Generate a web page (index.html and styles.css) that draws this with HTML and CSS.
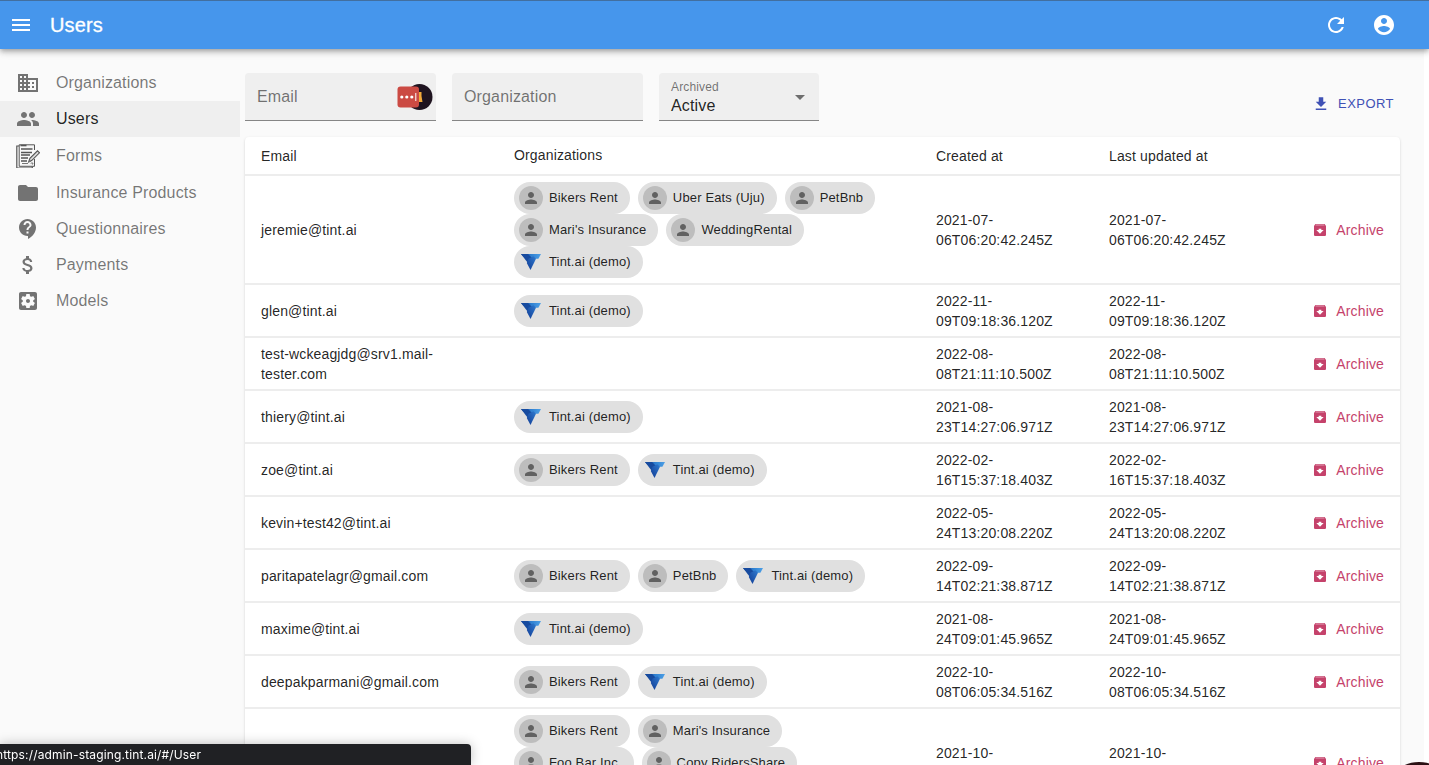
FILE: index.html
```
<!DOCTYPE html>
<html lang="en">
<head>
<meta charset="utf-8">
<title>Users</title>
<link rel="stylesheet" href="styles.css">
</head>
<body>
<svg class="defs" aria-hidden="true">
  <defs>
    <linearGradient id="tintA" x1="0" y1="0" x2="1" y2="0"><stop offset="0" stop-color="#123f8f"/><stop offset=".5" stop-color="#2f7fd0"/><stop offset="1" stop-color="#4da0e6"/></linearGradient>
    <linearGradient id="tintB" x1="1" y1="0" x2="0" y2="1"><stop offset="0" stop-color="#2f7bd0"/><stop offset="1" stop-color="#123c94"/></linearGradient>
  </defs>
  <symbol id="person" viewBox="0 0 24 24"><path d="M12 12c2.21 0 4-1.79 4-4s-1.79-4-4-4-4 1.790-4 4 1.790 4 4 4zm0 2c-2.670 0-8 1.340-8 4v2h16v-2c0-2.660-5.330-4-8-4z"/></symbol>
  <symbol id="tint" viewBox="0 0 24 24"><path d="M2 4h20l-2.600 4.700H6.500z" fill="url(#tintA)"/><path d="M2 4h7l4.500 4.500-5 4z" fill="#174b9f"/><path d="M9.500 8.700l5-2.500 2.500 2.500-5.500 11.300-3.700-7z" fill="url(#tintB)"/></symbol>
  <symbol id="archive" viewBox="0 0 24 24"><path d="M20.540 5.230l-1.390-1.680C18.880 3.210 18.470 3 18 3H6c-.47 0-.88.210-1.160.550L3.460 5.230C3.170 5.570 3 6.020 3 6.500V19c0 1.100.9 2 2 2h14c1.100 0 2-.9 2-2V6.500c0-.48-.17-.93-.46-1.270zM12 17.500L6.500 12H10v-2h4v2h3.500L12 17.500zM5.120 5l.81-1h12l.94 1H5.120z"/></symbol>
</svg>

<header class="appbar">
  <svg class="icon" viewBox="0 0 24 24"><path d="M3 18h18v-2H3v2zm0-5h18v-2H3v2zm0-7v2h18V6H3z"/></svg>
  <h1 class="title">Users</h1>
  <svg class="icon" viewBox="0 0 24 24"><path d="M17.650 6.350C16.200 4.900 14.210 4 12 4c-4.420 0-7.990 3.580-7.990 8s3.570 8 7.990 8c3.730 0 6.840-2.550 7.730-6h-2.080c-.82 2.330-3.040 4-5.650 4-3.310 0-6-2.690-6-6s2.690-6 6-6c1.660 0 3.140.69 4.220 1.780L13 11h7V4l-2.350 2.350z"/></svg>
  <svg class="icon" viewBox="0 0 24 24"><path d="M12 2C6.480 2 2 6.480 2 12s4.480 10 10 10 10-4.480 10-10S17.520 2 12 2zm0 3c1.660 0 3 1.340 3 3s-1.340 3-3 3-3-1.340-3-3 1.340-3 3-3zm0 14.200c-2.500 0-4.710-1.280-6-3.220.03-1.990 4-3.080 6-3.080 1.990 0 5.970 1.090 6 3.080-1.290 1.940-3.500 3.220-6 3.220z"/></svg>
</header>

<div class="layout">
  <nav class="menu">
    <a class="item"><svg class="icon" viewBox="0 0 24 24"><path d="M12 7V3H2v18h20V7H12zM6 19H4v-2h2v2zm0-4H4v-2h2v2zm0-4H4V9h2v2zm0-4H4V5h2v2zm4 12H8v-2h2v2zm0-4H8v-2h2v2zm0-4H8V9h2v2zm0-4H8V5h2v2zm10 12h-8v-2h2v-2h-2v-2h2v-2h-2V9h8v10zm-2-8h-2v2h2v-2zm0 4h-2v2h2v-2z"/></svg>Organizations</a>
    <a class="item active"><svg class="icon" viewBox="0 0 24 24"><path d="M16 11c1.660 0 2.990-1.340 2.990-3S17.660 5 16 5c-1.660 0-3 1.340-3 3s1.340 3 3 3zm-8 0c1.660 0 2.990-1.340 2.990-3S9.660 5 8 5C6.340 5 5 6.340 5 8s1.340 3 3 3zm0 2c-2.330 0-7 1.170-7 3.500V19h14v-2.500c0-2.330-4.670-3.500-7-3.500zm8 0c-.29 0-.62.020-.97.050 1.160.84 1.970 1.970 1.970 3.450V19h6v-2.500c0-2.330-4.670-3.500-7-3.500z"/></svg>Users</a>
    <a class="item forms"><svg class="icon" viewBox="0 0 24 24"><g fill="none" stroke="#555"><path d="M1 1h17.500v5M18.500 15v8H1zM18.500 22.500" stroke="none" fill="#f4f4f4"/><path d="M18.500 6V.8H3.200v21.500h15.300V15" stroke-width="1"/><path d="M3 2H.8v22h15.500v-1.500" stroke-width="1.200"/><path d="M4.500 1.500h6" stroke-width="1.600"/><path d="M5 5h11.500M5 8.500h11M5 11h9M5 14h7M5 17h6" stroke-width="1.300"/><path d="M6 19.500h6" stroke-width=".8"/><path d="M12.700 18l1.200-3.700 7.600-7.500 2 2-7.600 7.500z" fill="#ddd" stroke-width="1.100"/><path d="M15 19.500c1.500-2 2.500.5 1 1" stroke-width="1"/></g><path d="M12.300 18.500l1-3 2 2z"/></svg>Forms</a>
    <a class="item"><svg class="icon" viewBox="0 0 24 24"><path d="M10 4H4c-1.100 0-1.990.9-1.990 2L2 18c0 1.100.9 2 2 2h16c1.100 0 2-.9 2-2V8c0-1.100-.9-2-2-2h-8l-2-2z"/></svg>Insurance Products</a>
    <a class="item"><svg class="icon" viewBox="0 0 24 24"><path d="M11.500 2C6.810 2 3 5.810 3 10.500S6.810 19 11.500 19h.5v3c4.860-2.340 8-7 8-11.500C20 5.810 16.190 2 11.500 2zm1 14.500h-2v-2h2v2zm0-3.500h-2c0-3.250 3-3 3-5 0-1.100-.9-2-2-2s-2 .9-2 2h-2c0-2.210 1.790-4 4-4s4 1.790 4 4c0 2.500-3 2.750-3 5z"/></svg>Questionnaires</a>
    <a class="item"><svg class="icon" viewBox="0 0 24 24"><path d="M11.800 10.900c-2.270-.59-3-1.200-3-2.150 0-1.090 1.010-1.850 2.700-1.850 1.780 0 2.440.85 2.500 2.100h2.210c-.07-1.720-1.120-3.300-3.210-3.810V3h-3v2.160c-1.940.42-3.500 1.680-3.500 3.610 0 2.310 1.910 3.460 4.700 4.130 2.500.6 3 1.480 3 2.410 0 .69-.49 1.790-2.700 1.790-2.060 0-2.870-.92-2.980-2.100h-2.200c.12 2.190 1.760 3.420 3.680 3.830V21h3v-2.150c1.950-.37 3.500-1.500 3.500-3.550 0-2.840-2.430-3.810-4.700-4.400z"/></svg>Payments</a>
    <a class="item"><svg class="icon" viewBox="0 0 24 24"><path d="M12 10c-1.100 0-2 .9-2 2s.9 2 2 2 2-.9 2-2-.9-2-2-2zm7-7H5c-1.110 0-2 .9-2 2v14c0 1.100.89 2 2 2h14c1.110 0 2-.9 2-2V5c0-1.100-.89-2-2-2zm-1.750 9c0 .23-.02.460-.05.680l1.480 1.160c.13.110.17.300.08.450l-1.400 2.420c-.09.150-.27.210-.43.150l-1.740-.7c-.36.280-.76.510-1.180.69l-.26 1.850c-.03.170-.18.300-.35.300h-2.800c-.17 0-.32-.13-.35-.29l-.26-1.850c-.43-.18-.82-.41-1.180-.69l-1.740.7c-.16.060-.34 0-.43-.15l-1.400-2.420c-.09-.15-.05-.34.080-.45l1.480-1.160c-.03-.23-.05-.46-.05-.69 0-.23.020-.46.050-.68l-1.480-1.160c-.13-.11-.17-.3-.08-.45l1.400-2.420c.09-.15.270-.21.430-.15l1.740.7c.36-.28.760-.51 1.180-.69l.26-1.850c.03-.17.180-.3.350-.3h2.800c.17 0 .32.130.35.290l.26 1.850c.43.180.82.410 1.180.69l1.740-.7c.16-.06.340 0 .43.150l1.400 2.420c.09.150.05.340-.08.450l-1.480 1.160c.03.230.05.460.05.690z"/></svg>Models</a>
  </nav>

  <main class="content">
    <div class="toolbar">
      <div class="field"><span class="placeholder">Email</span>
        <svg class="manager" width="36" height="28" viewBox="0 0 36 28"><circle cx="22.500" cy="14" r="13" fill="#1f1420"/><path d="M20 9h4.500v4l1 6H20z" fill="#f2a93b"/><rect x=".5" y="3.500" width="21.500" height="21" rx="3" fill="#cb4a43"/><g fill="#fff"><circle cx="4.800" cy="14" r="1.600"/><circle cx="9.800" cy="14" r="1.600"/><circle cx="14.800" cy="14" r="1.600"/><path d="M18.300 10h1v8h-1z"/></g></svg>
      </div>
      <div class="field"><span class="placeholder">Organization</span></div>
      <div class="field select"><div><span class="label">Archived</span><span class="value">Active</span></div><svg class="icon" viewBox="0 0 24 24"><path d="M7 10l5 5 5-5z"/></svg></div>
      <button class="export"><svg viewBox="0 0 24 24"><path d="M19 9h-4V3H9v6H5l7 7 7-7zM5 18v2h14v-2H5z"/></svg>EXPORT</button>
    </div>

    <table class="grid">
      <colgroup><col class="c-email"><col class="c-orgs"><col class="c-date"><col class="c-date"><col></colgroup>
      <thead><tr><th>Email</th><th class="orgs-head">Organizations</th><th>Created at</th><th>Last updated at</th><th></th></tr></thead>
      <tbody>
        <tr class="tall"><td>jeremie@tint.ai</td><td><div class="chips">
          <span class="chip"><i class="avatar"><svg><use href="#person"/></svg></i>Bikers Rent</span><span class="chip"><i class="avatar"><svg><use href="#person"/></svg></i>Uber Eats (Uju)</span><span class="chip"><i class="avatar"><svg><use href="#person"/></svg></i>PetBnb</span><span class="chip"><i class="avatar"><svg><use href="#person"/></svg></i>Mari's Insurance</span><span class="chip"><i class="avatar"><svg><use href="#person"/></svg></i>WeddingRental</span><span class="chip"><svg class="logo"><use href="#tint"/></svg>Tint.ai (demo)</span>
        </div></td><td>2021-07-<br>06T06:20:42.245Z</td><td>2021-07-<br>06T06:20:42.245Z</td><td><a class="archive"><svg><use href="#archive"/></svg>Archive</a></td></tr>
        <tr><td>glen@tint.ai</td><td><div class="chips"><span class="chip"><svg class="logo"><use href="#tint"/></svg>Tint.ai (demo)</span></div></td><td>2022-11-<br>09T09:18:36.120Z</td><td>2022-11-<br>09T09:18:36.120Z</td><td><a class="archive"><svg><use href="#archive"/></svg>Archive</a></td></tr>
        <tr><td>test-wckeagjdg@srv1.mail-<br>tester.com</td><td></td><td>2022-08-<br>08T21:11:10.500Z</td><td>2022-08-<br>08T21:11:10.500Z</td><td><a class="archive"><svg><use href="#archive"/></svg>Archive</a></td></tr>
        <tr><td>thiery@tint.ai</td><td><div class="chips"><span class="chip"><svg class="logo"><use href="#tint"/></svg>Tint.ai (demo)</span></div></td><td>2021-08-<br>23T14:27:06.971Z</td><td>2021-08-<br>23T14:27:06.971Z</td><td><a class="archive"><svg><use href="#archive"/></svg>Archive</a></td></tr>
        <tr><td>zoe@tint.ai</td><td><div class="chips"><span class="chip"><i class="avatar"><svg><use href="#person"/></svg></i>Bikers Rent</span><span class="chip"><svg class="logo"><use href="#tint"/></svg>Tint.ai (demo)</span></div></td><td>2022-02-<br>16T15:37:18.403Z</td><td>2022-02-<br>16T15:37:18.403Z</td><td><a class="archive"><svg><use href="#archive"/></svg>Archive</a></td></tr>
        <tr><td>kevin+test42@tint.ai</td><td></td><td>2022-05-<br>24T13:20:08.220Z</td><td>2022-05-<br>24T13:20:08.220Z</td><td><a class="archive"><svg><use href="#archive"/></svg>Archive</a></td></tr>
        <tr><td>paritapatelagr@gmail.com</td><td><div class="chips"><span class="chip"><i class="avatar"><svg><use href="#person"/></svg></i>Bikers Rent</span><span class="chip"><i class="avatar"><svg><use href="#person"/></svg></i>PetBnb</span><span class="chip"><svg class="logo"><use href="#tint"/></svg>Tint.ai (demo)</span></div></td><td>2022-09-<br>14T02:21:38.871Z</td><td>2022-09-<br>14T02:21:38.871Z</td><td><a class="archive"><svg><use href="#archive"/></svg>Archive</a></td></tr>
        <tr><td>maxime@tint.ai</td><td><div class="chips"><span class="chip"><svg class="logo"><use href="#tint"/></svg>Tint.ai (demo)</span></div></td><td>2021-08-<br>24T09:01:45.965Z</td><td>2021-08-<br>24T09:01:45.965Z</td><td><a class="archive"><svg><use href="#archive"/></svg>Archive</a></td></tr>
        <tr><td>deepakparmani@gmail.com</td><td><div class="chips"><span class="chip"><i class="avatar"><svg><use href="#person"/></svg></i>Bikers Rent</span><span class="chip"><svg class="logo"><use href="#tint"/></svg>Tint.ai (demo)</span></div></td><td>2022-10-<br>08T06:05:34.516Z</td><td>2022-10-<br>08T06:05:34.516Z</td><td><a class="archive"><svg><use href="#archive"/></svg>Archive</a></td></tr>
        <tr class="tall"><td></td><td><div class="chips three"><span class="chip"><i class="avatar"><svg><use href="#person"/></svg></i>Bikers Rent</span><span class="chip"><i class="avatar"><svg><use href="#person"/></svg></i>Mari's Insurance</span><span class="chip"><i class="avatar"><svg><use href="#person"/></svg></i>Foo Bar Inc.</span><span class="chip"><i class="avatar"><svg><use href="#person"/></svg></i>Copy RidersShare</span></div></td><td>2021-10-<br>&nbsp;</td><td>2021-10-<br>&nbsp;</td><td><a class="archive"><svg><use href="#archive"/></svg>Archive</a></td></tr>
      </tbody>
    </table>
  </main>
  <div class="scroll-track"></div>
</div>
<div class="status">https://admin-staging.tint.ai/#/User</div>
<div class="corner"></div>
</body>
</html>
```
FILE: styles.css
```
* { box-sizing: border-box; }
html, body { height: 100%; overflow: hidden; }
body { margin: 0; background: #fafafa; color: rgba(0,0,0,.87); font: 14px/20px "Liberation Sans", Arial, sans-serif; letter-spacing: .15px; }
svg { display: block; fill: currentColor; flex: none; }
.defs { position: absolute; width: 0; height: 0; }
.icon { width: 24px; height: 24px; }

.appbar { position: relative; z-index: 2; display: flex; align-items: center; gap: 24px; height: 49px; padding: 0 33px 0 9px; border-top: 1px solid #426f9f; background: #4696ec; color: #fff; box-shadow: 0 2px 4px -1px rgba(0,0,0,.2), 0 4px 5px rgba(0,0,0,.14), 0 1px 10px rgba(0,0,0,.12); }
.title { flex: 1; margin: 0 0 0 -7px; font-size: 20px; line-height: 32px; font-weight: 400; -webkit-text-stroke: .3px currentColor; }

.layout { display: flex; height: 716px; }
.menu { flex: none; width: 240px; padding-top: 16px; font-size: 16px; color: rgba(0,0,0,.54); }
.item { display: flex; align-items: center; gap: 16px; height: 36px; padding-left: 16px; }
.item .icon { color: #737373; }
.item.active { background: #efefef; color: rgba(0,0,0,.87); }
.item.forms { height: 38px; }

.content { flex: 1; padding: 24px 24px 0 5px; }
.toolbar { display: flex; gap: 16px; height: 64px; }
.field { display: flex; align-items: center; justify-content: space-between; width: 191px; height: 48px; padding: 1px 3px 0 12px; background: #efefef; border-bottom: 1px solid #868686; border-radius: 4px 4px 0 0; font-size: 16px; color: rgba(0,0,0,.54); }
.field.select { width: 160px; padding-right: 7px; }
.label, .value { display: block; }
.label { font-size: 12px; line-height: 16px; padding-top: 1px; }
.value { color: rgba(0,0,0,.87); line-height: 22px; }
.export { display: flex; align-items: center; gap: 8px; height: 30px; margin: 16px 1px 0 auto; padding: 0 5px; border: 0; background: none; color: #3f51b5; font: 13px/22px "Liberation Sans", Arial, sans-serif; letter-spacing: .46px; }
.export svg { width: 18px; height: 18px; }

.grid { width: 1155px; table-layout: fixed; border-collapse: separate; border-spacing: 0; background: #fff; border-radius: 4px; box-shadow: 0 2px 1px -1px rgba(0,0,0,.2), 0 1px 1px rgba(0,0,0,.14), 0 1px 3px rgba(0,0,0,.12); }
.c-email { width: 253px; }
.c-orgs { width: 422px; }
.c-date { width: 173px; }
th, td { padding: 0 16px; border-bottom: 2px solid #ededed; text-align: left; font-weight: 400; vertical-align: middle; }
th { height: 39px; padding-top: 1px; }
th.orgs-head { padding-top: 0; padding-bottom: 1px; }
td { height: 53px; }
.tall td { height: 109px; }

.chips { display: flex; flex-wrap: wrap; column-gap: 8px; }
.chips.three { height: 96px; align-content: flex-start; }
.chip { display: flex; align-items: center; gap: 6px; height: 32px; padding: 0 12px 0 5px; border-radius: 16px; background: #e0e0e0; font-size: 13px; white-space: nowrap; }
.avatar { display: flex; align-items: center; justify-content: center; width: 24px; height: 24px; border-radius: 50%; background: #bdbdbd; color: #616161; }
.avatar svg { width: 18px; height: 18px; }
.logo { width: 24px; height: 24px; }

.archive { display: flex; align-items: center; justify-content: flex-end; gap: 8px; color: #c5426b; white-space: nowrap; }
.archive svg { width: 16px; height: 16px; }

.scroll-track { flex: none; width: 5px; background: #fff; }
.status { position: fixed; left: 0; bottom: 0; width: 471px; height: 21px; border-radius: 0 4px 0 0; background: #202124; color: #fff; font: 12px/21px Inter, sans-serif; text-indent: -4px; box-shadow: 0 0 12px rgba(0,0,0,.25); overflow: hidden; }
.corner { position: fixed; right: -10px; bottom: -17px; width: 40px; height: 20px; border-radius: 50%; background: #2b1114; }
```
